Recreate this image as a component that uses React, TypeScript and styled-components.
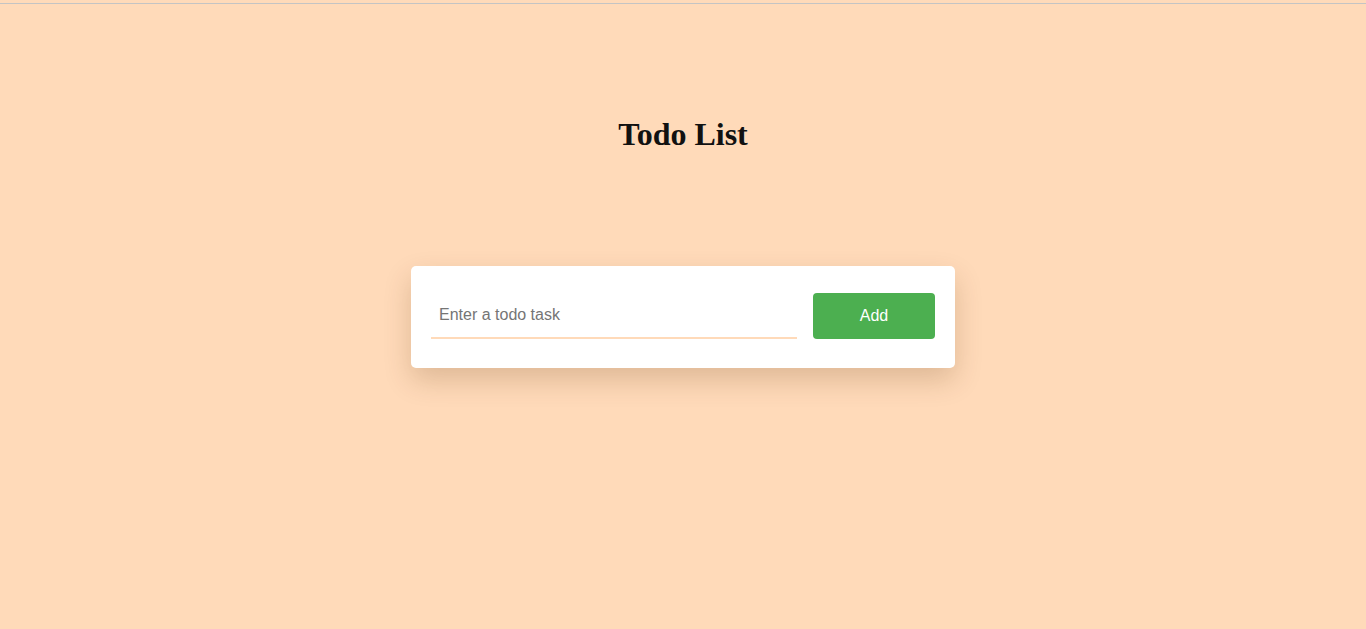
import React, { useState } from "react";
import styled, { createGlobalStyle } from "styled-components";

const Global = createGlobalStyle`
  html, body {
    margin: 0;
    padding: 0;
    background: #ffdab9;
    min-height: 100%;
  }
  body {
    font-family: "Liberation Serif", "Times New Roman", serif;
  }
  * { box-sizing: border-box; }
`;

const Page = styled.div`
  padding-top: 3px;
  min-height: 629px;
  display: flex;
  flex-direction: column;
  align-items: center;
`;

const TopRule = styled.hr`
  align-self: stretch;
  margin: 0;
  border: none;
  height: 1px;
  background: #c4c4c4;
`;

const Title = styled.h1`
  margin: 112px 0 0;
  font-family: "Liberation Serif", "Times New Roman", serif;
  font-size: 32px;
  font-weight: bold;
  color: #111;
  line-height: 37px;
`;

const Card = styled.div`
  margin-top: 113px;
  width: 544px;
  background: #fff;
  border-radius: 5px;
  padding: 27px 20px 29px;
  display: flex;
  align-items: center;
  gap: 16px;
  box-shadow: 0 12px 28px rgba(90, 50, 10, 0.2);
`;

const Input = styled.input`
  flex: 1;
  height: 46px;
  border: none;
  border-bottom: 2px solid #ffdab9;
  outline: none;
  padding: 0 8px;
  font-family: "Liberation Sans", Arial, sans-serif;
  font-size: 16px;
  color: #333;
  background: transparent;
  &::placeholder { color: #757575; }
`;

const Button = styled.button`
  width: 122px;
  height: 46px;
  border: none;
  border-radius: 4px;
  background: #4caf50;
  color: #fff;
  font-family: "Liberation Sans", Arial, sans-serif;
  font-size: 16px;
  cursor: pointer;
`;

export default function App() {
  const [value, setValue] = useState("");
  return (
    <>
      <Global />
      <Page>
        <TopRule />
        <Title>Todo List</Title>
        <Card>
          <Input
            placeholder="Enter a todo task"
            value={value}
            onChange={(e) => setValue(e.target.value)}
          />
          <Button>Add</Button>
        </Card>
      </Page>
    </>
  );
}
